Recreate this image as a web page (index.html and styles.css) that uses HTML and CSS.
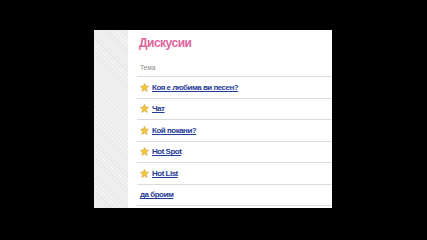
FILE: index.html
```html
<!DOCTYPE html>
<html>
<head>
<meta charset="utf-8">
<link rel="stylesheet" href="styles.css">
</head>
<body>
<div class="page">
  <div class="side"></div>
  <div class="main">
    <h1 class="title">Дискусии</h1>
    <div class="head">Тема</div>
    <ul class="list">
      <li class="row"><svg class="star" viewBox="0 0 10 10"><polygon points="5,0.4 6.4,3.4 9.6,3.7 7.2,5.9 7.9,9.4 5,7.6 2.1,9.4 2.8,5.9 0.4,3.7 3.6,3.4"/></svg><a href="#">Коя е любима ви песен?</a></li>
      <li class="row"><svg class="star" viewBox="0 0 10 10"><polygon points="5,0.4 6.4,3.4 9.6,3.7 7.2,5.9 7.9,9.4 5,7.6 2.1,9.4 2.8,5.9 0.4,3.7 3.6,3.4"/></svg><a href="#">Чат</a></li>
      <li class="row"><svg class="star" viewBox="0 0 10 10"><polygon points="5,0.4 6.4,3.4 9.6,3.7 7.2,5.9 7.9,9.4 5,7.6 2.1,9.4 2.8,5.9 0.4,3.7 3.6,3.4"/></svg><a href="#">Кой покани?</a></li>
      <li class="row"><svg class="star" viewBox="0 0 10 10"><polygon points="5,0.4 6.4,3.4 9.6,3.7 7.2,5.9 7.9,9.4 5,7.6 2.1,9.4 2.8,5.9 0.4,3.7 3.6,3.4"/></svg><a href="#">Hot Spot</a></li>
      <li class="row"><svg class="star" viewBox="0 0 10 10"><polygon points="5,0.4 6.4,3.4 9.6,3.7 7.2,5.9 7.9,9.4 5,7.6 2.1,9.4 2.8,5.9 0.4,3.7 3.6,3.4"/></svg><a href="#">Hot List</a></li>
      <li class="row"><a href="#">да броим</a></li>
    </ul>
  </div>
</div>
</body>
</html>
```
FILE: styles.css
```css
html, body {
  margin: 0;
  padding: 0;
  background: #000;
  width: 427px;
  height: 240px;
  overflow: hidden;
}
.page {
  margin: 30px 0 0 94px;
  width: 238px;
  height: 178px;
  background: #fff;
  display: flex;
}
.side {
  width: 34px;
  background: repeating-linear-gradient(45deg, #e8e8e8 0 1px, #f1f1f1 1px 3px);
}
.main {
  flex: 1;
  padding-left: 9px;
  font-family: "Liberation Sans", Arial, sans-serif;
}
.title {
  margin: 0;
  padding-top: 5px;
  padding-left: 2px;
  height: 26px;
  font-size: 12px;
  letter-spacing: -0.5px;
  font-weight: bold;
  color: #e0649c;
  line-height: 16px;
}
.head {
  font-size: 6.5px;
  color: #888;
  padding-left: 3px;
  height: 15px;
  line-height: 14px;
  border-bottom: 1px solid #dcdcdc;
}
.list {
  list-style: none;
  margin: 0;
  padding: 0;
}
.row {
  height: 20.5px;
  border-bottom: 1px solid #dcdcdc;
  display: flex;
  align-items: center;
  padding-left: 3px;
}
.star {
  width: 9px;
  height: 9px;
  margin-right: 3px;
  fill: #f2c640;
  stroke: #d0a030;
  stroke-width: 0.6;
}
.row a {
  color: #1f3c96;
  font-size: 8px;
  letter-spacing: -0.5px;
  font-weight: bold;
  text-decoration: underline;
}
```
